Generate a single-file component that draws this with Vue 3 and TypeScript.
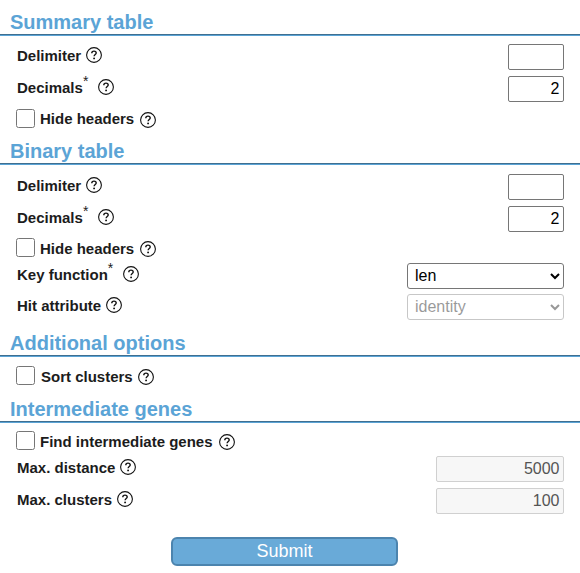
<script setup lang="ts">
import { ref } from 'vue'

interface Field {
  id: string
  label: string
  kind: 'text' | 'select' | 'check'
  value?: string
  required?: boolean
  disabled?: boolean
  wide?: boolean
  offset?: boolean
}
interface Section {
  title: string
  size: string
  fields: Field[]
}

const sections = ref<Section[]>([
  {
    title: 'Summary table',
    size: 'first',
    fields: [
      { id: 'summary-delimiter', label: 'Delimiter', kind: 'text', value: '' },
      { id: 'summary-decimals', label: 'Decimals', kind: 'text', value: '2', required: true },
      { id: 'summary-headers', label: 'Hide headers', kind: 'check' },
    ],
  },
  {
    title: 'Binary table',
    size: 'second',
    fields: [
      { id: 'binary-delimiter', label: 'Delimiter', kind: 'text', value: '' },
      { id: 'binary-decimals', label: 'Decimals', kind: 'text', value: '2', required: true },
      { id: 'binary-headers', label: 'Hide headers', kind: 'check' },
      { id: 'key-function', label: 'Key function', kind: 'select', value: 'len', required: true },
      { id: 'hit-attribute', label: 'Hit attribute', kind: 'select', value: 'identity', disabled: true },
    ],
  },
  {
    title: 'Additional options',
    size: 'third',
    fields: [{ id: 'sort-clusters', label: 'Sort clusters', kind: 'check', offset: true }],
  },
  {
    title: 'Intermediate genes',
    size: 'fourth',
    fields: [
      { id: 'find-genes', label: 'Find intermediate genes', kind: 'check' },
      { id: 'max-distance', label: 'Max. distance', kind: 'text', value: '5000', disabled: true, wide: true },
      { id: 'max-clusters', label: 'Max. clusters', kind: 'text', value: '100', disabled: true, wide: true },
    ],
  },
])
</script>

<template>
  <form class="form" @submit.prevent>
    <section v-for="s in sections" :key="s.title" :class="['section', s.size]">
      <h2 class="title">{{ s.title }}</h2>
      <div v-for="f in s.fields" :key="f.id" :class="['row', f.kind]">
        <input v-if="f.kind === 'check'" :id="f.id" type="checkbox" class="box" />
        <label :for="f.id" :class="['label', { offset: f.offset }]">{{ f.label }}</label>
        <span v-if="f.required" class="star">*</span>
        <svg :class="['help', { level: f.offset }]" viewBox="0 0 16 16">
          <circle cx="8" cy="8" r="7.4" fill="none" stroke="#111" stroke-width="1.1" />
          <path d="M5.8 6.2C5.8 4.8 6.7 4.1 8 4.1s2.2.8 2.2 1.9c0 1.5-2.1 1.6-2.1 3.3" fill="none" stroke="#111" stroke-width="1.4" />
          <circle cx="8.1" cy="11.4" r=".95" fill="#111" />
        </svg>
        <input
          v-if="f.kind === 'text'"
          :id="f.id"
          v-model="f.value"
          type="text"
          :disabled="f.disabled"
          :class="['field', { wide: f.wide }]"
        />
        <select v-if="f.kind === 'select'" :id="f.id" :disabled="f.disabled" class="field choice">
          <option>{{ f.value }}</option>
        </select>
      </div>
    </section>
    <button class="submit" type="submit">Submit</button>
  </form>
</template>

<style>
body {
  background: #fff;
}
</style>

<style scoped>
.form {
  display: flex;
  flex-direction: column;
  height: 573px;
  overflow: hidden;
  font-family: 'Liberation Sans', Arial, sans-serif;
  color: #1c1c1c;
}
.title {
  box-sizing: border-box;
  display: flex;
  align-items: flex-end;
  height: 33px;
  margin: 0 0 5px;
  padding: 0 0 1px 10px;
  border-bottom: 1px solid #5ba4d6;
  box-shadow: inset 0 -1px #3f6f90;
  color: #5ba4d6;
  font-size: 20px;
  line-height: 24px;
  font-weight: bold;
}
.first .title {
  height: 36px;
}
.second .title {
  margin-bottom: 6px;
}
.third .title {
  height: 35px;
}
.fourth .title {
  height: 34px;
  margin-bottom: 4px;
}
.row {
  display: flex;
  align-items: center;
  box-sizing: border-box;
  height: 32px;
  padding: 0 16px 0 17px;
}
.check {
  height: 27px;
  padding-left: 16px;
}
.second .check {
  height: 25px;
}
.fourth .check {
  height: 26px;
}
.select {
  height: 31px;
}
.label {
  padding-bottom: 2px;
  font-size: 15px;
  line-height: 18px;
  font-weight: bold;
  white-space: nowrap;
}
.check .label {
  margin-left: 5px;
  padding-bottom: 0;
}
.second .check .label,
.third .check .label {
  padding-top: 2px;
}
.fourth .check .label {
  padding-top: 4px;
}
.check .offset {
  margin-left: 6px;
}
.star {
  align-self: flex-start;
  width: 6px;
  margin-right: 4px;
  font-size: 14px;
  line-height: 16px;
}
.help {
  flex: none;
  width: 16px;
  height: 16px;
  margin: 0 0 4px 5px;
}
.select .help {
  margin-bottom: 3px;
}
.check .help {
  margin: 3px 0 0 6px;
}
.fourth .check .help {
  margin-top: 4px;
}
.check .level {
  margin: 2px 0 0 5px;
}
.box {
  width: 19px;
  height: 19px;
  margin: 0;
}
.field {
  box-sizing: border-box;
  width: 56px;
  height: 26px;
  margin: 0 0 0 auto;
  padding: 0 3.5px 0 4px;
  border: 1px solid #767676;
  border-radius: 2px;
  background: #fff;
  color: #000;
  font: 16px/24px 'Liberation Sans', Arial, sans-serif;
  text-align: right;
}
.wide {
  width: 128px;
}
.field:disabled {
  border-color: #d0d0d0;
  background: #f7f7f7;
  color: #545454;
}
.choice {
  width: 157px;
  padding: 0 0 0 3px;
  border-radius: 3px;
  text-align: left;
}
.choice:disabled {
  border-color: #767676;
  background: #fff;
  color: #000;
  opacity: 0.4;
}
.submit {
  flex: none;
  box-sizing: border-box;
  width: 227px;
  height: 29px;
  margin: 20px 0 0 171px;
  padding: 0 0 1px;
  border: 2px solid #4c84ae;
  border-radius: 6px;
  background: #69aad8;
  color: #fff;
  font: 18px/24px 'Liberation Sans', Arial, sans-serif;
}
</style>
